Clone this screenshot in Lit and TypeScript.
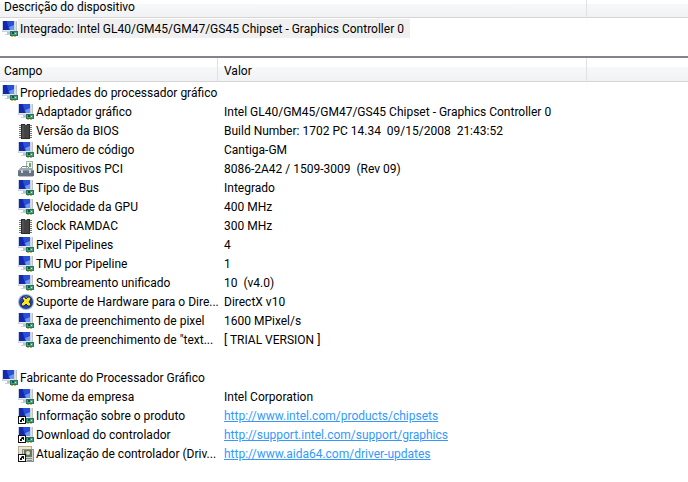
import { LitElement, html, css, svg, nothing } from "lit";
import { customElement, property } from "lit/decorators.js";

type IconName = "display" | "chip" | "device" | "directx" | "display-link" | "update-link";

interface Row {
  icon: IconName;
  field: string;
  value: string;
  link?: boolean;
}

interface Group {
  title: string;
  rows: Row[];
}

const groups: Group[] = [
  {
    title: "Propriedades do processador gráfico",
    rows: [
      { icon: "display", field: "Adaptador gráfico", value: "Intel GL40/GM45/GM47/GS45 Chipset - Graphics Controller 0" },
      { icon: "chip", field: "Versão da BIOS", value: "Build Number: 1702 PC 14.34  09/15/2008  21:43:52" },
      { icon: "display", field: "Número de código", value: "Cantiga-GM" },
      { icon: "device", field: "Dispositivos PCI", value: "8086-2A42 / 1509-3009  (Rev 09)" },
      { icon: "display", field: "Tipo de Bus", value: "Integrado" },
      { icon: "display", field: "Velocidade da GPU", value: "400 MHz" },
      { icon: "chip", field: "Clock RAMDAC", value: "300 MHz" },
      { icon: "display", field: "Pixel Pipelines", value: "4" },
      { icon: "display", field: "TMU por Pipeline", value: "1" },
      { icon: "display", field: "Sombreamento unificado", value: "10  (v4.0)" },
      { icon: "directx", field: "Suporte de Hardware para o Dire...", value: "DirectX v10" },
      { icon: "display", field: "Taxa de preenchimento de pixel", value: "1600 MPixel/s" },
      { icon: "display", field: 'Taxa de preenchimento de "text...', value: "[ TRIAL VERSION ]" },
    ],
  },
  {
    title: "Fabricante do Processador Gráfico",
    rows: [
      { icon: "display", field: "Nome da empresa", value: "Intel Corporation" },
      { icon: "display-link", field: "Informação sobre o produto", value: "http://www.intel.com/products/chipsets", link: true },
      { icon: "display-link", field: "Download do controlador", value: "http://support.intel.com/support/graphics", link: true },
      { icon: "update-link", field: "Atualização de controlador (Driv...", value: "http://www.aida64.com/driver-updates", link: true },
    ],
  },
];

const display = svg`
  <rect x="12" y="0" width="3" height="13" fill="#dcdedf"/>
  <rect x="14" y="0" width="1" height="13" fill="#bfc3c5"/>
  <rect x="0" y="0" width="13" height="11" fill="#ccd3e0"/>
  <rect x="1" y="0" width="11" height="9" fill="#2346cc"/>
  <path d="M1 0h4l2 9H1z" fill="#1429a8"/>
  <path d="M5 0h7v4L6 5z" fill="#2a50da"/>
  <path d="M7 6l5-2v5H8z" fill="#6d97ec"/>
  <rect x="1" y="9" width="11" height="1" fill="#e6eaf0"/>
  <rect x="5" y="11" width="3" height="2" fill="#bcc2c6"/>
  <rect x="3" y="13" width="5" height="1" fill="#cfd3d6"/>
  <rect x="8" y="10" width="8" height="5" fill="#26795d"/>
  <rect x="9" y="11" width="6" height="3" fill="#4aa07f"/>
  <rect x="10" y="11" width="2" height="2" fill="#1b4f42"/>
  <rect x="13" y="12" width="1" height="1" fill="#cdeedd"/>
  <path d="M9 15h2v1H9zM12 15h2v1h-2z" fill="#dcb54a"/>`;

const shortcut = svg`
  <rect x="0" y="8" width="8" height="8" fill="#111"/>
  <rect x="1" y="9" width="6" height="6" fill="#fff"/>
  <path d="M3 10h3v3H5v-1H4v2H2v-2h1v-1h1z" fill="#111"/>`;

const icons = {
  display,
  chip: svg`
    <path d="M1 2h13v1H1zM1 4h13v1H1zM1 6h13v1H1zM1 8h13v1H1zM1 10h13v1H1zM1 12h13v1H1zM1 14h13v1H1z" fill="#777"/>
    <rect x="3" y="1" width="9" height="15" fill="#2b2b2b"/>
    <rect x="4" y="2" width="7" height="13" fill="#505050"/>
    <rect x="6" y="2" width="5" height="13" fill="#434343"/>
    <rect x="7" y="1" width="2" height="1" fill="#c0c0c0"/>`,
  device: svg`
    <rect x="8" y="0" width="7" height="8" fill="#a9afae"/>
    <rect x="9" y="1" width="5" height="7" fill="#f2f6f2"/>
    <rect x="11" y="2" width="2" height="4" fill="#55b354"/>
    <path d="M4 5h6v1H4zM3 6h1v2H3zM10 6h1v2h-1z" fill="#7d8790"/>
    <path d="M2 7h12l2 3H0z" fill="#9daab3"/>
    <rect x="0" y="9" width="16" height="6" fill="#657480"/>
    <rect x="0" y="9" width="16" height="1" fill="#8494a0"/>
    <rect x="1" y="15" width="14" height="1" fill="#b9c0c5"/>
    <rect x="3" y="9" width="2" height="3" fill="#cfd7dc"/>
    <rect x="11" y="9" width="2" height="3" fill="#cfd7dc"/>`,
  directx: svg`
    <circle cx="8" cy="8" r="8" fill="#a7b5d9"/>
    <circle cx="8" cy="8" r="7" fill="#2343a8"/>
    <path d="M3 5a6 6 0 0 1 10 0z" fill="#6583cd"/>
    <path d="M5 3h2l1 2 2-2h2l1 2-2 3 2 2-1 2h-2l-2-2-2 2H4l-1-2 3-3-2-3z" fill="#f8e81c" stroke="#20265c" stroke-width="1"/>`,
  "display-link": svg`${display}${shortcut}`,
  "update-link": svg`
    <rect x="0" y="0" width="14" height="12" fill="#b3aa98"/>
    <rect x="1" y="1" width="12" height="2" fill="#efe6bd"/>
    <rect x="1" y="3" width="12" height="8" fill="#dde0dd"/>
    <rect x="4" y="3" width="12" height="13" fill="#8e918c"/>
    <rect x="5" y="4" width="10" height="11" fill="#cdd1ce"/>
    <rect x="6" y="4" width="8" height="7" fill="#63786a"/>
    <circle cx="10" cy="7" r="2" fill="#e8e4a8"/>
    <path d="M8 12h6v1H8zM9 14h5v1H9z" fill="#8b8f8c"/>
    ${shortcut}`,
};

@customElement("row-icon")
class RowIcon extends LitElement {
  @property() name: IconName = "display";

  static styles = css`
    :host {
      display: block;
      flex: none;
      width: 16px;
      height: 16px;
    }
    .glyph {
      display: block;
    }
  `;

  render() {
    return html`<svg class="glyph" width="16" height="16" viewBox="0 0 16 16" aria-hidden="true">${icons[this.name]}</svg>`;
  }
}

@customElement("app-root")
class AppRoot extends LitElement {
  static styles = css`
    :host {
      display: block;
      min-height: 100vh;
      background: #fff;
      color: #000;
      font: 12px/18px Roboto, "Open Sans", sans-serif;
    }
    .list {
      width: 100%;
      table-layout: fixed;
      border-collapse: separate;
      border-spacing: 0;
    }
    .col-field {
      width: 218px;
    }
    .col-value {
      width: 369px;
    }
    .col-device {
      width: 587px;
    }
    .head {
      box-sizing: border-box;
      height: 24px;
      padding: 2px 4px 0;
      text-align: left;
      font-weight: 400;
      border-bottom: 1px solid #d5d5d5;
      border-right: 1px solid #dfe1e3;
      background: linear-gradient(#fff 0 40%, #f7f8fa 40%, #f1f2f4);
    }
    .head:last-child {
      border-right: 0;
    }
    .head.value {
      padding-left: 6px;
    }
    .devices .head {
      height: 18px;
      line-height: 14px;
      padding: 0 4px 3px;
      background: linear-gradient(#fff 0 4px, #f7f8fa 4px, #f1f2f4);
    }
    .devices {
      min-height: 56px;
      border-bottom: 2px solid #828290;
    }
    .cell {
      height: 19px;
      padding: 0;
      white-space: pre;
      overflow: hidden;
    }
    .body::before {
      content: "";
      display: block;
      height: 1px;
    }
    .label {
      display: flex;
      align-items: center;
      height: 19px;
      padding-left: 2px;
      gap: 2px;
    }
    .label.child {
      padding-left: 18px;
    }
    .label.device {
      gap: 0;
    }
    .selected {
      height: 19px;
      line-height: 20px;
      padding: 0 6px 0 2px;
      background: #f0f0f0;
    }
    .cell.value {
      padding-left: 6px;
    }
    .link {
      color: #3399ff;
      text-decoration: underline;
    }
  `;

  private renderValue(row: Row) {
    return row.link ? html`<a class="link" href=${row.value}>${row.value}</a>` : row.value;
  }

  private renderGroup(group: Group, index: number) {
    return html`
      ${index > 0 ? html`<tr><td class="cell" colspan="3"></td></tr>` : nothing}
      <tr>
        <td class="cell" colspan="3"><div class="label"><row-icon name="display"></row-icon><span>${group.title}</span></div></td>
      </tr>
      ${group.rows.map(
        (row) => html`<tr>
          <td class="cell"><div class="label child"><row-icon name=${row.icon}></row-icon><span>${row.field}</span></div></td>
          <td class="cell value">${this.renderValue(row)}</td>
          <td class="cell"></td>
        </tr>`
      )}
    `;
  }

  render() {
    return html`
      <section class="devices">
        <table class="list">
          <colgroup><col class="col-device" /><col /></colgroup>
          <thead>
            <tr><th class="head" scope="col">Descrição do dispositivo</th><th class="head"></th></tr>
          </thead>
          <tbody class="body">
            <tr>
              <td class="cell"><div class="label device"><row-icon name="display"></row-icon><span class="selected">Integrado: Intel GL40/GM45/GM47/GS45 Chipset - Graphics Controller 0</span></div></td>
              <td class="cell"></td>
            </tr>
          </tbody>
        </table>
      </section>
      <section>
        <table class="list">
          <colgroup><col class="col-field" /><col class="col-value" /><col /></colgroup>
          <thead>
            <tr><th class="head" scope="col">Campo</th><th class="head value" scope="col">Valor</th><th class="head"></th></tr>
          </thead>
          <tbody class="body">${groups.map((group, index) => this.renderGroup(group, index))}</tbody>
        </table>
      </section>
    `;
  }
}
